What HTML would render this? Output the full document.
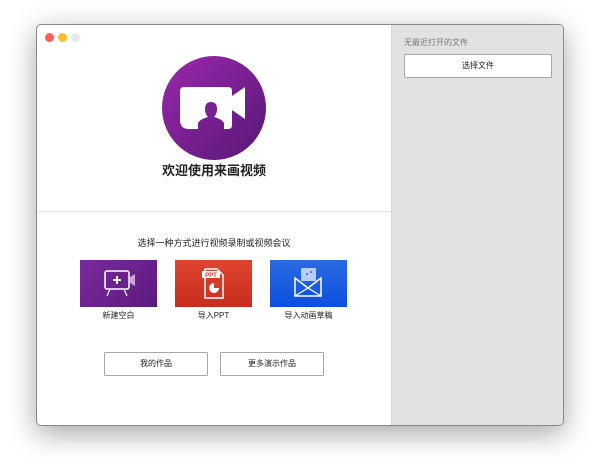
<!DOCTYPE html>
<html><head><meta charset="utf-8">
<style>
*{margin:0;padding:0;box-sizing:border-box}
body{width:600px;height:474px;background:#fff;position:relative;overflow:hidden;font-family:"Liberation Sans","Noto Sans CJK SC",sans-serif}
.win{position:absolute;left:36px;top:24px;width:528px;height:402px;background:#fff;border:1px solid #8a8a8a;border-radius:5px;overflow:hidden;box-shadow:0 8px 28px rgba(0,0,0,.35)}
.right{position:absolute;left:354px;top:0;width:174px;height:402px;background:#e3e2e0;border-left:1px solid #d6d6d6}
.dot{position:absolute;top:8px;width:9px;height:9px;border-radius:50%}
.abs{position:absolute}
.btn{position:absolute;background:#fff;border:1px solid #a9a9a9;font-size:8px;color:#222;text-align:center;line-height:22px;border-radius:1px}
.tile{position:absolute;top:235px;width:77px;height:47px}
.lbl{position:absolute;top:285px;width:77px;text-align:center;font-size:8px;color:#222}
</style></head><body>
<div class="win">
<div class="dot" style="left:8px;background:#fe5f57"></div>
<div class="dot" style="left:21px;background:#febc2e"></div>
<div class="dot" style="left:34px;background:#e8e8e8"></div>
<svg class="abs" style="left:125px;top:31px" width="104" height="104" viewBox="0 0 104 104">
<defs><linearGradient id="g" x1="0" y1="0" x2="1" y2="1"><stop offset="0" stop-color="#9b28ad"/><stop offset="1" stop-color="#561876"/></linearGradient></defs>
<circle cx="52" cy="52" r="52" fill="url(#g)"/>
<path d="M18 35 q0-4 4-4 h44 q4 0 4 4 v5 l13-9 v32 l-13-9 v15 q0 4-4 4 h-4 v-6 q-2-4-10-6 q3-3 3-8 q0-7-6-7 q-6 0-6 7 q0 5 3 8 q-8 2-10 6 v6 h-9 q-9 0-9-9 z" fill="#fff"/>
</svg>
<div class="abs" style="left:0;width:354px;top:135px;text-align:center;font-size:13px;font-weight:bold;color:#222">欢迎使用来画视频</div>
<div class="abs" style="left:0;top:186px;width:354px;height:1px;background:#e2e2e2"></div>
<div class="abs" style="left:0;width:354px;top:211px;text-align:center;font-size:9px;color:#222">选择一种方式进行视频录制或视频会议</div>
<div class="tile" style="left:43px;background:linear-gradient(135deg,#7a2a9e,#5c1a7c)">
<svg width="77" height="47"><rect x="25" y="11" width="24" height="18" rx="2" fill="none" stroke="#fff" stroke-width="1.5"/><path d="M37 16v8M33 20h8" stroke="#fff" stroke-width="2"/><path d="M50 17l5-3v12l-5-3z" fill="#c9a7d8"/><path d="M30 29l-3 7M44 29l3 7" stroke="#fff" stroke-width="1.2"/></svg></div>
<div class="lbl" style="left:43px">新建空白</div>
<div class="tile" style="left:138px;background:linear-gradient(180deg,#e04530,#c72c1e)">
<svg width="77" height="47"><path d="M30 9h12l6 6v23h-18z" fill="none" stroke="#fff" stroke-width="1.5"/><rect x="27" y="11" width="18" height="7" fill="#fff"/><text x="36" y="17" font-size="6" font-weight="bold" fill="#d03a26" text-anchor="middle" font-family="Liberation Sans">PPT</text><circle cx="39" cy="28" r="5" fill="#fff"/><path d="M39 28v-5a5 5 0 0 1 5 5z" fill="#d03a26"/></svg></div>
<div class="lbl" style="left:138px">导入PPT</div>
<div class="tile" style="left:233px;background:linear-gradient(180deg,#2a6be0,#0c4fe0)">
<svg width="77" height="47"><rect x="31" y="8" width="15" height="13" rx="1" fill="#b9cdf6"/><circle cx="37" cy="14" r="1" fill="#2a6be0"/><circle cx="41" cy="12" r="1" fill="#2a6be0"/><path d="M25 18l13 10 13-10v18h-26z" fill="none" stroke="#fff" stroke-width="1.5"/><path d="M25 36l13-8 13 8" fill="none" stroke="#fff" stroke-width="1.2"/></svg></div>
<div class="lbl" style="left:233px">导入动画草稿</div>
<div class="btn" style="left:67px;top:327px;width:104px;height:24px">我的作品</div>
<div class="btn" style="left:183px;top:327px;width:104px;height:24px">更多演示作品</div>
<div class="right">
<div class="abs" style="left:12px;top:12px;font-size:8px;color:#777">无最近打开的文件</div>
<div class="btn" style="left:12px;top:29px;width:148px;height:24px">选择文件</div>
</div>
</div>
</body></html>
